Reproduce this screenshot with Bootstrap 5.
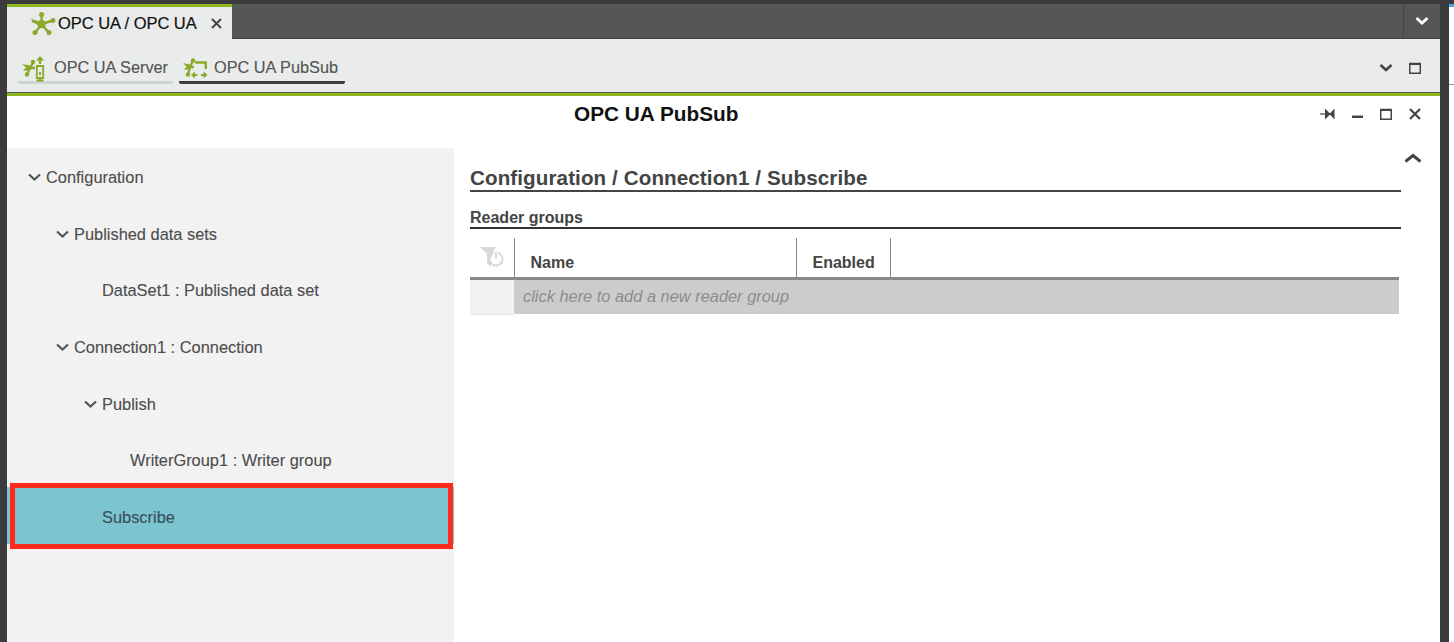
<!DOCTYPE html>
<html lang="en">
<head>
<meta charset="utf-8">
<title>OPC UA PubSub</title>
<link href="https://cdn.jsdelivr.net/npm/bootstrap@5.3.0/dist/css/bootstrap.min.css" rel="stylesheet">
<style>
html,body{height:642px;overflow:hidden}
body{background:#3b3b3d;font-family:"Liberation Sans",Arial,sans-serif;color:#444}
.shell{height:642px;padding:4px 0 0 7px}
.workspace{width:1433px;height:638px;background:#fff}
.side-strip{width:5px;margin-left:9px;height:638px;background:#fff;border-top:3px solid #4aa3df}
.side-strip::after{content:"";display:block;height:1px;background:#999;margin-top:77px}
.tabbar{height:35px;background:#555757;border-bottom:1px solid #444}
.main-tab{width:225px;height:35px;background:#e9ebeb;border-top:3px solid #8db81f;padding-left:22px;gap:2px;font-size:16.500px;color:#111;-webkit-text-stroke:.2px #111;letter-spacing:-.05px}
.tab-close{margin-left:12px;line-height:0}
.tab-more{width:37px;border-left:1px solid #444}
.subbar{height:54px;background:#eaecec;border-bottom:1px solid #555;padding:0 19px 0 11px}
.sub-tab{height:31px;margin-top:14px;padding:1px 3px 0;font-size:16.300px;color:#555;-webkit-text-stroke:.15px #555;gap:9px;border-bottom:3px solid #cfd3d3;border-radius:2px;white-space:nowrap}
.sub-tab svg{overflow:visible}
.sub-tab-first{width:155px;margin-right:6px}
.sub-tab-active{width:166px;padding-left:2px;border-bottom-color:#3f3f3f}
.sub-actions{padding-top:5px}
.green-rule{height:3px;background:#8db81f}
.titlebar-wrap{position:relative}
.titlebar{height:52px;padding:0 19px 0 0}
.panel-title{font-size:20.800px;font-weight:700;color:#111;position:absolute;left:567px;top:2px;white-space:nowrap;line-height:32px}
.win-icons{gap:17px;margin-top:2px;height:32px}
.split{height:494px}
.tree{width:447px;background:#f2f2f2;padding-top:1px}
.tree-row{height:56.700px;font-size:16.400px;color:#4c4c4c;-webkit-text-stroke:.1px #4c4c4c;white-space:nowrap}
.lvl0{padding-left:21px}.lvl1{padding-left:49px}.lvl2{padding-left:77px}.lvl3{padding-left:95px}.lvl4{padding-left:123px}
.tree-row svg{margin-right:5px;flex:none}
.tree-row-selected{background:#7bc4d0;color:#3a4f57;-webkit-text-stroke:.1px #3a4f57;position:relative;padding:3px 0 0 95px;margin-top:-2px;height:57px}
.selection-mark{position:absolute;left:3px;right:1px;top:-4px;bottom:-5px;border:5px solid #ff2a1c;pointer-events:none}
.detail{padding:17px 0 0 16px;position:relative}
.detail-inner{width:931px}
.scroll-up{position:absolute;left:950px;top:5px;line-height:0}
.h-section{font-size:20.600px;font-weight:700;color:#444;border-bottom:2px solid #444;height:27px;line-height:26px;margin:0;white-space:nowrap;letter-spacing:.1px}
.h-sub{font-size:16px;font-weight:700;color:#444;border-bottom:2px solid #333;height:24px;line-height:26px;margin:13px 0 9px}
.grid-table{width:929px;border-collapse:collapse;table-layout:fixed;margin:0}
.grid-table th{height:40px;padding:0 0 6px 16px;vertical-align:bottom;font-size:16px;font-weight:700;color:#444;border-right:1px solid #888;border-bottom:3px solid #888;background:#fff;line-height:17px;box-shadow:none}
.grid-table th.col-filter{padding:9px 0 0 10px;vertical-align:top;line-height:0}
.grid-table th.col-fill{border-right:0}
.grid-table td{height:36px;padding:0 0 1px 9px;background:#ccc;font-size:16.400px;font-style:italic;color:#8c8c8c;border:0;box-shadow:none;white-space:nowrap;overflow:visible;vertical-align:middle}
.grid-table td.cell-head{background:#f2f2f2;border-bottom:1px solid #e4e4e4}
</style>
</head>
<body>
<div class="shell d-flex">
  <div class="workspace d-flex flex-column">
    <div class="tabbar d-flex justify-content-between">
      <div class="main-tab d-flex align-items-center">
        <svg width="27" height="24" viewBox="0 0 27 24"><g stroke="#8da82a" stroke-width="2.400"><path d="M12.600 13V4M12.600 13 24 9.500M12.600 13 20 22M12.600 13 6 22M12.600 13 3 10"/></g><g fill="#8da82a"><circle cx="12.600" cy="13" r="4.200"/><circle cx="12.600" cy="3.500" r="2.500"/><circle cx="24" cy="9.500" r="2.400"/><circle cx="20" cy="21.500" r="2.500"/><circle cx="6" cy="21.500" r="2.500"/><path d="M1 7.500l9 3v5z"/></g></svg>
        <span>OPC UA / OPC UA</span>
        <span class="tab-close"><svg width="11" height="11" viewBox="0 0 11 11"><path d="M1 1l9 9M10 1l-9 9" stroke="#444" stroke-width="2"/></svg></span>
      </div>
      <div class="tab-more d-flex align-items-center justify-content-center">
        <svg width="14" height="10" viewBox="0 0 14 10"><path d="M1.500 2 7 7l5.500-5" fill="none" stroke="#fff" stroke-width="2.800"/></svg>
      </div>
    </div>
    <div class="subbar d-flex justify-content-between">
      <div class="d-flex align-items-start">
        <div class="sub-tab sub-tab-first d-flex align-items-center">
          <svg width="24" height="24" viewBox="0 0 24 24"><g stroke="#8da82a" stroke-width="2.400" fill="none"><path d="M9 12 12 6.500M9 12 6 18.500M9 12H14"/></g><g fill="#8da82a"><path d="M1 8l8 1.500 1 4.500-8 1 3-3.500z"/><circle cx="12" cy="6" r="2.200"/><circle cx="6" cy="18.500" r="2.200"/><path d="M19 0l4 4.500h-2.800V8h-2.400V4.500H15z"/></g><path d="M15.800 10h6.400v12h-6.400zM19 22v2M15.500 24.500h7" fill="none" stroke="#8da82a" stroke-width="1.800"/><rect x="18" y="16" width="2" height="3" fill="#8da82a"/></svg>
          <span>OPC UA Server</span>
        </div>
        <div class="sub-tab sub-tab-active d-flex align-items-center">
          <svg width="24" height="24" viewBox="0 0 24 24"><g stroke="#8da82a" stroke-width="2.400" fill="none"><path d="M9 11 12 4.500M9 11 7 18M9 11H13"/><path d="M14 6.500h10.800v6.500"/></g><g fill="#8da82a"><path d="M2 7l7 1.500 1 4.500-7 1 2.500-3.500z"/><circle cx="12" cy="4.500" r="2.200"/><circle cx="7" cy="18.500" r="2.200"/><path d="M10 19l4-3.500v2.500h2.500v2H14v2.500zM26.500 19l-4-3.500v2.500H20v2h2.500v2.500z"/></g></svg>
          <span>OPC UA PubSub</span>
        </div>
      </div>
      <div class="sub-actions d-flex align-items-center gap-3">
        <svg width="14" height="10" viewBox="0 0 14 10"><path d="M1.500 2 7 7l5.500-5" fill="none" stroke="#444" stroke-width="2.600"/></svg>
        <svg width="12" height="12" viewBox="0 0 12 12"><path d="M.75 1.500h10.500v9.750H.75z" fill="none" stroke="#444" stroke-width="1.500"/><path d="M0 1h12v2H0z" fill="#444"/></svg>
      </div>
    </div>
    <div class="green-rule"></div>
    <div class="titlebar-wrap">
      <div class="titlebar d-flex justify-content-end">
        <h1 class="panel-title m-0">OPC UA PubSub</h1>
        <div class="win-icons d-flex align-items-center">
          <svg width="15" height="12" viewBox="0 0 15 12"><path d="M0 6h5" stroke="#888" stroke-width="1.800"/><path d="M5 6h9" stroke="#444" stroke-width="1.800"/><path d="M5 .5v11l5.500-5.500zM14.500 .5v11l-5-5.500z" fill="#444"/></svg>
          <svg width="11" height="12" viewBox="0 0 11 12"><path d="M0 7.500h11v2.500H0z" fill="#444"/></svg>
          <svg width="12" height="12" viewBox="0 0 12 12"><path d="M.75 1.500h10.500v9.750H.75z" fill="none" stroke="#444" stroke-width="1.500"/><path d="M0 1h12v2H0z" fill="#444"/></svg>
          <svg width="12" height="12" viewBox="0 0 12 12"><path d="M1 1l10 10M11 1 1 11" stroke="#444" stroke-width="2.200"/></svg>
        </div>
      </div>
    </div>
    <div class="split d-flex">
      <nav class="tree">
        <div class="tree-row lvl0 d-flex align-items-center"><svg width="13" height="9" viewBox="0 0 13 9"><path d="M1 1.500 6.500 6.500 12 1.500" fill="none" stroke="#555" stroke-width="2.200"/></svg>Configuration</div>
        <div class="tree-row lvl1 d-flex align-items-center"><svg width="13" height="9" viewBox="0 0 13 9"><path d="M1 1.500 6.500 6.500 12 1.500" fill="none" stroke="#555" stroke-width="2.200"/></svg>Published data sets</div>
        <div class="tree-row lvl3 d-flex align-items-center">DataSet1 : Published data set</div>
        <div class="tree-row lvl1 d-flex align-items-center"><svg width="13" height="9" viewBox="0 0 13 9"><path d="M1 1.500 6.500 6.500 12 1.500" fill="none" stroke="#555" stroke-width="2.200"/></svg>Connection1 : Connection</div>
        <div class="tree-row lvl2 d-flex align-items-center"><svg width="13" height="9" viewBox="0 0 13 9"><path d="M1 1.500 6.500 6.500 12 1.500" fill="none" stroke="#555" stroke-width="2.200"/></svg>Publish</div>
        <div class="tree-row lvl4 d-flex align-items-center">WriterGroup1 : Writer group</div>
        <div class="tree-row tree-row-selected d-flex align-items-center">Subscribe<span class="selection-mark"></span></div>
      </nav>
      <section class="detail flex-grow-1">
        <div class="detail-inner">
          <h2 class="h-section">Configuration / Connection1 / Subscribe</h2>
          <h3 class="h-sub">Reader groups</h3>
          <table class="table grid-table">
            <colgroup><col style="width:44px"><col style="width:282px"><col style="width:94px"><col></colgroup>
            <thead><tr>
              <th class="col-filter"><svg width="24" height="21" viewBox="0 0 24 21"><path d="M0 0h16l-5 7v13l-4-4V7z" fill="#d8d8d8"/><circle cx="16" cy="12" r="6.500" fill="#fff" stroke="#d8d8d8" stroke-width="2"/><path d="M16 4.500v6" stroke="#fff" stroke-width="4"/><path d="M16 5.500v6" stroke="#d8d8d8" stroke-width="2"/></svg></th>
              <th>Name</th><th>Enabled</th><th class="col-fill"></th>
            </tr></thead>
            <tbody><tr>
              <td class="cell-head"></td><td>click here to add a new reader group</td><td></td><td></td>
            </tr></tbody>
          </table>
        </div>
        <span class="scroll-up"><svg width="18" height="11" viewBox="0 0 18 11"><path d="M1.500 8.500 9 2.500l7.500 6" fill="none" stroke="#444" stroke-width="3"/></svg></span>
      </section>
    </div>
  </div>
  <div class="side-strip"></div>
</div>
<script src="https://cdn.jsdelivr.net/npm/bootstrap@5.3.0/dist/js/bootstrap.bundle.min.js"></script>
</body>
</html>
